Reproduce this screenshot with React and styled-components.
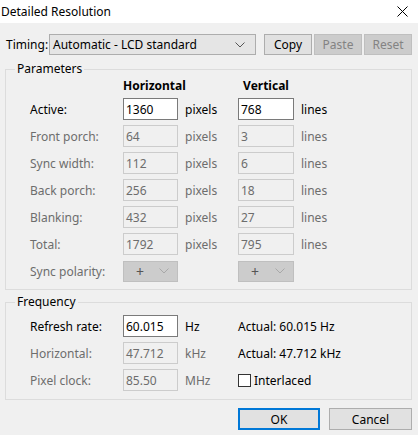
import { createGlobalStyle } from "styled-components";
import styled from "styled-components";

const GlobalStyle = createGlobalStyle`
  html, body {
    margin: 0;
    padding: 0;
    background: #f0f0f0;
  }
  body {
    font-family: "Noto Sans", "Open Sans", sans-serif;
    font-size: 12px;
    color: #000;
  }
`;

const params = [
  { label: "Front porch:", h: "64", v: "3" },
  { label: "Sync width:", h: "112", v: "6" },
  { label: "Back porch:", h: "256", v: "18" },
  { label: "Blanking:", h: "432", v: "27" },
  { label: "Total:", h: "1792", v: "795" },
];

export default function App() {
  return (
    <Window>
      <GlobalStyle />
      <TitleBar>
        <Title>Detailed Resolution</Title>
        <CloseIcon width="11" height="11" viewBox="0 0 11 11">
          <path d="M0.5 0.5 L10.5 10.5 M10.5 0.5 L0.5 10.5" stroke="#000" strokeWidth="1" />
        </CloseIcon>
      </TitleBar>
      <Body>
        <TimingRow>
          <TimingLabel>Timing:</TimingLabel>
          <Combo>
            <span>Automatic - LCD standard</span>
            <Chevron color="#555" />
          </Combo>
          <ButtonGroup>
            <SmallButton>Copy</SmallButton>
            <SmallButton disabled>Paste</SmallButton>
            <SmallButton disabled>Reset</SmallButton>
          </ButtonGroup>
        </TimingRow>

        <Group $top={6}>
          <Legend>Parameters</Legend>
          <ParamGrid>
            <span />
            <ColHead>Horizontal</ColHead>
            <span />
            <ColHead>Vertical</ColHead>
            <span />

            <RowLabel>Active:</RowLabel>
            <Field>1360</Field>
            <Unit>pixels</Unit>
            <Field>768</Field>
            <Unit>lines</Unit>

            {params.map((p) => (
              <Row key={p.label}>
                <RowLabel $disabled>{p.label}</RowLabel>
                <Field $disabled>{p.h}</Field>
                <Unit $disabled>pixels</Unit>
                <Field $disabled>{p.v}</Field>
                <Unit $disabled>lines</Unit>
              </Row>
            ))}

            <RowLabel $disabled>Sync polarity:</RowLabel>
            <Polarity>
              <span>+</span>
              <Chevron color="#a8a8a8" />
            </Polarity>
            <span />
            <Polarity>
              <span>+</span>
              <Chevron color="#a8a8a8" />
            </Polarity>
            <span />
          </ParamGrid>
        </Group>

        <Group $top={4}>
          <Legend>Frequency</Legend>
          <FreqGrid>
            <RowLabel>Refresh rate:</RowLabel>
            <Field>60.015</Field>
            <Unit>Hz</Unit>
            <Actual>Actual: 60.015 Hz</Actual>

            <RowLabel $disabled>Horizontal:</RowLabel>
            <Field $disabled>47.712</Field>
            <Unit $disabled>kHz</Unit>
            <Actual>Actual: 47.712 kHz</Actual>

            <RowLabel $disabled>Pixel clock:</RowLabel>
            <Field $disabled>85.50</Field>
            <Unit $disabled>MHz</Unit>
            <CheckRow>
              <CheckBox />
              <span>Interlaced</span>
            </CheckRow>
          </FreqGrid>
        </Group>

        <Footer>
          <DialogButton $default>OK</DialogButton>
          <DialogButton>Cancel</DialogButton>
        </Footer>
      </Body>
    </Window>
  );
}

function Chevron({ color }) {
  return (
    <svg width="10" height="6" viewBox="0 0 10 6">
      <path d="M0.5 0.5 L5 5 L9.5 0.5" fill="none" stroke={color} strokeWidth="1" />
    </svg>
  );
}

const Row = ({ children }) => <>{children}</>;

const Window = styled.div`
  width: 418px;
  height: 435px;
  background: #f0f0f0;
  overflow: hidden;
`;

const TitleBar = styled.div`
  height: 23px;
  background: #fff;
  display: flex;
  align-items: center;
  justify-content: space-between;
  padding: 0 10px 0 1px;
`;

const Title = styled.div`
  font-size: 12px;
  line-height: 16px;
`;

const CloseIcon = styled.svg`
  margin-top: -1px;
`;

const Body = styled.div`
  padding: 11px 6px 0 5px;
`;

const TimingRow = styled.div`
  display: flex;
  align-items: center;
  height: 21px;
`;

const TimingLabel = styled.div`
  width: 44px;
  padding-left: 1px;
  box-sizing: border-box;
`;

const Combo = styled.div`
  width: 207px;
  height: 21px;
  box-sizing: border-box;
  border: 1px solid #adadad;
  background: #e5e5e5;
  display: flex;
  align-items: center;
  justify-content: space-between;
  padding: 0 10px 0 3px;
`;

const ButtonGroup = styled.div`
  display: flex;
  gap: 2px;
  margin-left: 8px;
`;

const SmallButton = styled.div`
  width: 48px;
  height: 21px;
  box-sizing: border-box;
  display: flex;
  align-items: center;
  justify-content: center;
  border: 1px solid ${(p) => (p.disabled ? "#bfbfbf" : "#adadad")};
  background: ${(p) => (p.disabled ? "#cccccc" : "#e1e1e1")};
  color: ${(p) => (p.disabled ? "#838383" : "#000")};
`;

const Group = styled.fieldset`
  margin: ${(p) => p.$top}px 0 0 0;
  padding: 0 0 7px 0;
  border: 1px solid #dcdcdc;
  min-width: 0;
`;

const Legend = styled.legend`
  margin-left: 9px;
  padding: 0 2px;
  line-height: 16px;
  font-size: 12px;
`;

const ParamGrid = styled.div`
  display: grid;
  grid-template-columns: 93px 55px 60px 56px 1fr;
  grid-template-rows: 16px repeat(7, 22px);
  row-gap: 5px;
  align-items: center;
  padding-left: 24px;
  & > :nth-child(-n + 5) {
    margin-bottom: -1px;
  }
`;

const FreqGrid = styled.div`
  display: grid;
  grid-template-columns: 93px 55px 60px 1fr;
  grid-template-rows: repeat(3, 22px);
  row-gap: 5px;
  align-items: center;
  padding: 5px 0 1px 24px;
`;

const ColHead = styled.div`
  font-weight: bold;
  text-align: center;
  line-height: 16px;
`;

const RowLabel = styled.div`
  color: ${(p) => (p.$disabled ? "#6d6d6d" : "#000")};
`;

const Field = styled.div`
  height: 22px;
  box-sizing: border-box;
  border: 1px solid ${(p) => (p.$disabled ? "#cccccc" : "#7a7a7a")};
  background: ${(p) => (p.$disabled ? "#f0f0f0" : "#fff")};
  color: ${(p) => (p.$disabled ? "#6d6d6d" : "#000")};
  display: flex;
  align-items: center;
  padding-left: 2px;
`;

const Unit = styled.div`
  padding-left: 7px;
  color: ${(p) => (p.$disabled ? "#6d6d6d" : "#000")};
`;

const Polarity = styled.div`
  height: 21px;
  box-sizing: border-box;
  border: 1px solid #bfbfbf;
  background: #cccccc;
  color: #555;
  display: flex;
  align-items: center;
  justify-content: space-between;
  padding: 0 8px 0 12px;
  font-size: 14px;
`;

const Actual = styled.div``;

const CheckRow = styled.div`
  display: flex;
  align-items: center;
  gap: 3px;
`;

const CheckBox = styled.div`
  width: 13px;
  height: 13px;
  box-sizing: border-box;
  border: 1px solid #333;
  background: #fff;
`;

const Footer = styled.div`
  display: flex;
  justify-content: flex-end;
  gap: 9px;
  margin-top: 8px;
`;

const DialogButton = styled.div`
  width: ${(p) => (p.$default ? 82 : 83)}px;
  height: 22px;
  box-sizing: border-box;
  display: flex;
  align-items: center;
  justify-content: center;
  background: #e1e1e1;
  border: ${(p) => (p.$default ? "2px solid #0078d7" : "1px solid #adadad")};
`;
